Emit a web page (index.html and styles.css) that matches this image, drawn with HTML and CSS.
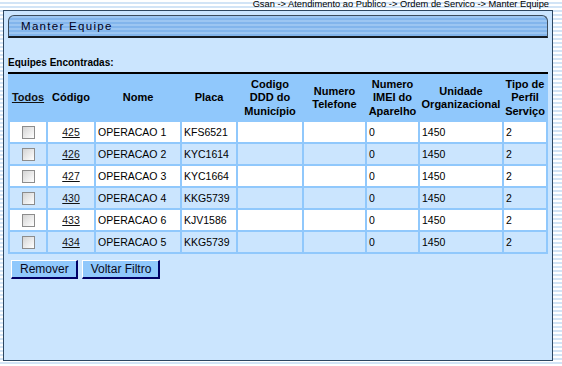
FILE: index.html
```html
<!DOCTYPE html>
<html lang="pt-BR">
<head>
  <meta charset="UTF-8">
  <title>Manter Equipe</title>
  <link rel="stylesheet" href="styles.css">
</head>
<body>
  <div class="breadcrumb">Gsan -&gt; Atendimento ao Publico -&gt; Ordem de Servico -&gt; Manter Equipe</div>

  <div class="panel">
    <div class="title-bar">Manter Equipe</div>

    <p class="label">Equipes Encontradas:</p>

    <table class="grid">
      <colgroup>
        <col style="width: 36px">
        <col style="width: 46px">
        <col style="width: 84px">
        <col style="width: 54px">
        <col style="width: 64px">
        <col style="width: 61px">
        <col style="width: 51px">
        <col style="width: 82px">
        <col style="width: 42px">
      </colgroup>
      <tr class="head">
        <th><a href="#">Todos</a></th>
        <th>Código</th>
        <th>Nome</th>
        <th>Placa</th>
        <th>Codigo DDD do Município</th>
        <th>Numero Telefone</th>
        <th>Numero IMEI do Aparelho</th>
        <th>Unidade Organizacional</th>
        <th>Tipo de Perfil Serviço</th>
      </tr>
      <tr class="odd">
        <td class="check"><input type="checkbox"></td>
        <td class="code"><a href="#">425</a></td>
        <td>OPERACAO 1</td>
        <td>KFS6521</td>
        <td></td>
        <td></td>
        <td>0</td>
        <td>1450</td>
        <td>2</td>
      </tr>
      <tr class="even">
        <td class="check"><input type="checkbox"></td>
        <td class="code"><a href="#">426</a></td>
        <td>OPERACAO 2</td>
        <td>KYC1614</td>
        <td></td>
        <td></td>
        <td>0</td>
        <td>1450</td>
        <td>2</td>
      </tr>
      <tr class="odd">
        <td class="check"><input type="checkbox"></td>
        <td class="code"><a href="#">427</a></td>
        <td>OPERACAO 3</td>
        <td>KYC1664</td>
        <td></td>
        <td></td>
        <td>0</td>
        <td>1450</td>
        <td>2</td>
      </tr>
      <tr class="even">
        <td class="check"><input type="checkbox"></td>
        <td class="code"><a href="#">430</a></td>
        <td>OPERACAO 4</td>
        <td>KKG5739</td>
        <td></td>
        <td></td>
        <td>0</td>
        <td>1450</td>
        <td>2</td>
      </tr>
      <tr class="odd">
        <td class="check"><input type="checkbox"></td>
        <td class="code"><a href="#">433</a></td>
        <td>OPERACAO 6</td>
        <td>KJV1586</td>
        <td></td>
        <td></td>
        <td>0</td>
        <td>1450</td>
        <td>2</td>
      </tr>
      <tr class="even">
        <td class="check"><input type="checkbox"></td>
        <td class="code"><a href="#">434</a></td>
        <td>OPERACAO 5</td>
        <td>KKG5739</td>
        <td></td>
        <td></td>
        <td>0</td>
        <td>1450</td>
        <td>2</td>
      </tr>
    </table>

    <div class="actions">
      <button class="btn">Remover</button><button class="btn">Voltar Filtro</button>
    </div>
  </div>
</body>
</html>
```

FILE: styles.css
```css
body {
  margin: 0;
  font-family: "Liberation Sans", Arial, sans-serif;
  color: #000;
  background: repeating-linear-gradient(#ffffff 0 2px, #d2e4f6 2px 4px);
  height: 366px;
  overflow: hidden;
}
.breadcrumb {
  height: 10px;
  line-height: 9px;
  font-size: 9.3px;
  text-align: right;
  padding-right: 13px;
  white-space: nowrap;
}
.panel {
  margin-left: 3px;
  width: 540px;
  height: 341px;
  padding: 4px;
  background-color: #cbe5fe;
  border: 1px solid #2d4660;
}
.title-bar {
  height: 20px;
  line-height: 21px;
  padding-left: 12px;
  font-size: 11.5px;
  letter-spacing: 1.3px;
  color: #000020;
  border: 1px solid #3c4c5c;
  border-bottom: 2px solid #151c24;
  border-radius: 6px 6px 0 0;
  background: repeating-linear-gradient(#9cc6f2 0 2px, #82b5ec 2px 4px);
}
.label {
  margin: 19px 0 4px;
  font-size: 10px;
  font-weight: bold;
  line-height: 11px;
}
.grid {
  width: 540px;
  table-layout: fixed;
  border-collapse: separate;
  border-spacing: 2px;
  border-top: 2px solid #000;
  background-color: #90c8fc;
  font-size: 10.5px;
}
.grid th {
  height: 44px;
  padding: 0;
  font-size: 11px;
  line-height: 13.5px;
  text-align: center;
}
.grid th a,
.grid td a {
  color: #111;
}
.grid td {
  height: 20px;
  padding: 0 0 0 2px;
  white-space: nowrap;
}
.odd td {
  background-color: #ffffff;
}
.even td {
  background-color: #cbe5fe;
}
.grid td.check,
.grid td.code {
  text-align: center;
  padding: 0;
}
.check input {
  appearance: none;
  width: 13px;
  height: 13px;
  margin: 3px 0 0;
  border: 1px solid #8c8c8c;
  background: linear-gradient(135deg, #d4d4d4, #ffffff);
}
.actions {
  margin-top: 5px;
  padding-left: 3px;
}
.btn {
  font-family: "Liberation Sans", Arial, sans-serif;
  font-size: 12px;
  height: 19px;
  padding: 0 7px 0 8px;
  margin-right: 4px;
  color: #0a0a20;
  background-color: #90c8fc;
  border: 1px solid;
  border-color: #ffffff #000066 #000066 #ffffff;
  border-width: 1px 2px 2px 1px;
  cursor: pointer;
}
```
